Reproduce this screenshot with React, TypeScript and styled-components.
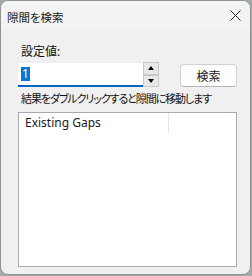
import { createGlobalStyle } from "styled-components";
import styled from "styled-components";

const GlobalStyle = createGlobalStyle`
  html, body {
    margin: 0;
    padding: 0;
    background: #a3abaa;
  }
  body {
    font-family: "Noto Sans", "Noto Sans CJK JP", sans-serif;
    font-feature-settings: "palt";
  }
`;

const Window = styled.div`
  box-sizing: border-box;
  width: 251px;
  height: 275px;
  background: #f0f0f0;
  border: 1px solid #8e9495;
  border-radius: 8px;
  overflow: hidden;
  display: flex;
  flex-direction: column;
`;

const TitleBar = styled.div`
  height: 29px;
  display: flex;
  align-items: center;
  justify-content: space-between;
  padding: 0 9px 0 6px;
  background: #f3f3f3;
`;

const Title = styled.span`
  font-size: 11.5px;
  color: #1a1a1a;
  padding-top: 2px;
`;

const CloseButton = styled.div`
  width: 12px;
  height: 12px;
  display: flex;
  align-items: center;
  justify-content: center;
`;

const Body = styled.div`
  flex: 1;
  display: flex;
  flex-direction: column;
  padding: 0 13px 0 17px;
`;

const FieldLabel = styled.div<{ $top: number; $compact?: boolean }>`
  margin-top: ${(p) => p.$top}px;
  padding-left: 3px;
  height: 14px;
  line-height: 14px;
  font-size: ${(p) => (p.$compact ? 11 : 12)}px;
  letter-spacing: ${(p) => (p.$compact ? -1.1 : 0)}px;
  color: #111;
`;

const Row = styled.div`
  display: flex;
  align-items: flex-start;
  margin-top: 4px;
  height: 25px;
`;

const Input = styled.div`
  box-sizing: border-box;
  width: 125px;
  height: 24px;
  background: #ffffff;
  border-bottom: 2px solid #0067c0;
  display: flex;
  align-items: center;
  padding-left: 3px;
`;

const Selected = styled.span`
  background: #0078d7;
  color: #ffffff;
  font-size: 12px;
  line-height: 14px;
  padding: 0 1px;
`;

const Spinner = styled.div`
  display: flex;
  flex-direction: column;
  width: 16px;
  height: 25px;
  margin-top: -1px;
`;

const SpinButton = styled.div`
  box-sizing: border-box;
  flex: 1;
  background: #e8e8e8;
  border: 1px solid #c9c9c9;
  display: flex;
  align-items: center;
  justify-content: center;
`;

const Arrow = styled.div<{ $up?: boolean }>`
  width: 0;
  height: 0;
  border-left: 3.5px solid transparent;
  border-right: 3.5px solid transparent;
  ${(p) =>
    p.$up
      ? "border-bottom: 4px solid #000;"
      : "border-top: 4px solid #000;"}
`;

const SearchButton = styled.button`
  box-sizing: border-box;
  margin-left: 21px;
  width: 57px;
  height: 23px;
  margin-top: 1px;
  background: #fdfdfd;
  border: 1px solid #d0d0d0;
  border-bottom-color: #b5b5b5;
  border-radius: 4px;
  font-family: inherit;
  font-feature-settings: "palt";
  font-size: 12px;
  color: #1a1a1a;
  padding: 0;
`;

const ListBox = styled.div`
  box-sizing: border-box;
  margin-top: 6px;
  width: 219px;
  height: 155px;
  background: #ffffff;
  border: 1px solid #a7a9b3;
`;

const Header = styled.div`
  display: flex;
  height: 20px;
`;

const HeaderCell = styled.div<{ $w: number }>`
  width: ${(p) => p.$w}px;
  box-sizing: border-box;
  border-right: 1px solid #e5e5e5;
  padding-left: 6px;
  font-size: 12px;
  line-height: 20px;
  color: #1a1a1a;
`;

export default function App() {
  return (
    <>
      <GlobalStyle />
      <Window>
        <TitleBar>
          <Title>隙間を検索</Title>
          <CloseButton>
            <svg width="11" height="11" viewBox="0 0 11 11">
              <path d="M0.5 0.5 L10.5 10.5 M10.5 0.5 L0.5 10.5" stroke="#222" strokeWidth="1" />
            </svg>
          </CloseButton>
        </TitleBar>
        <Body>
          <FieldLabel $top={15}>設定値:</FieldLabel>
          <Row>
            <Input>
              <Selected>1</Selected>
            </Input>
            <Spinner>
              <SpinButton>
                <Arrow $up />
              </SpinButton>
              <SpinButton>
                <Arrow />
              </SpinButton>
            </Spinner>
            <SearchButton>検索</SearchButton>
          </Row>
          <FieldLabel $top={4} $compact>
            結果をダブルクリックすると隙間に移動します
          </FieldLabel>
          <ListBox>
            <Header>
              <HeaderCell $w={150}>Existing Gaps</HeaderCell>
            </Header>
          </ListBox>
        </Body>
      </Window>
    </>
  );
}
